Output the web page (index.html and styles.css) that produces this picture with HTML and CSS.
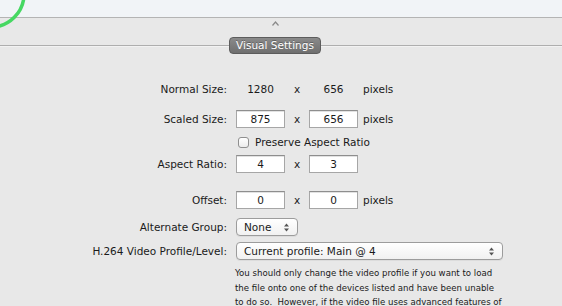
FILE: index.html
```html
<!DOCTYPE html>
<html lang="en">

<head>
    <meta charset="UTF-8">
    <title>Visual Settings</title>
    <link rel="stylesheet" href="styles.css">
</head>

<body>
    <div class="top-pane">
        <svg class="ring" width="40" height="32" viewBox="0 0 40 32">
            <circle cx="-9" cy="-6" r="33" fill="none" stroke="#46d862" stroke-width="3.5" />
        </svg>
    </div>

    <div class="splitter">
        <svg width="7" height="5" viewBox="0 0 7 5">
            <path d="M0.5 4.5 L3.5 1 L6.5 4.5" fill="none" stroke="#8a8a8a" stroke-width="1.2" />
        </svg>
    </div>

    <div class="section-head">
        <span class="section-title">Visual Settings</span>
    </div>

    <div class="form">
        <div class="row row-normal">
            <label>Normal Size:</label>
            <div class="controls">
                <span class="value">1280</span>
                <span class="times">x</span>
                <span class="value">656</span>
                <span class="unit">pixels</span>
            </div>
        </div>

        <div class="row row-scaled">
            <label>Scaled Size:</label>
            <div class="controls">
                <span class="field">875</span>
                <span class="times">x</span>
                <span class="field">656</span>
                <span class="unit">pixels</span>
            </div>
        </div>

        <div class="row row-check">
            <label></label>
            <div class="controls">
                <span class="checkbox"></span>
                <span class="check-label">Preserve Aspect Ratio</span>
            </div>
        </div>

        <div class="row row-aspect">
            <label>Aspect Ratio:</label>
            <div class="controls">
                <span class="field">4</span>
                <span class="times">x</span>
                <span class="field">3</span>
            </div>
        </div>

        <div class="row row-offset">
            <label>Offset:</label>
            <div class="controls">
                <span class="field">0</span>
                <span class="times">x</span>
                <span class="field">0</span>
                <span class="unit">pixels</span>
            </div>
        </div>

        <div class="row row-group">
            <label>Alternate Group:</label>
            <div class="controls">
                <span class="popup popup-small">None
                    <svg class="arrows" width="5" height="9" viewBox="0 0 5 9">
                        <path d="M0 3.5 L2.5 0.5 L5 3.5 Z M0 5.5 L2.5 8.5 L5 5.5 Z" fill="#555" />
                    </svg>
                </span>
            </div>
        </div>

        <div class="row row-profile">
            <label>H.264 Video Profile/Level:</label>
            <div class="controls">
                <span class="popup popup-wide">Current profile: Main @ 4
                    <svg class="arrows" width="5" height="9" viewBox="0 0 5 9">
                        <path d="M0 3.5 L2.5 0.5 L5 3.5 Z M0 5.5 L2.5 8.5 L5 5.5 Z" fill="#555" />
                    </svg>
                </span>
            </div>
        </div>

        <p class="note">You should only change the video profile if you want to load<br>
            the file onto one of the devices listed and have been unable<br>
            to do so.&nbsp; However, if the video file uses advanced features of<br>
            the codec, then the file may still be unplayable on the device.</p>
    </div>
</body>

</html>
```

FILE: styles.css
```css
body {
    font-family: 'DejaVu Sans', sans-serif;
    font-size: 10.5px;
    color: #1a1a1a;
    background-color: #e8e8e8;
    margin: 0;
    height: 306px;
    overflow: hidden;
}

.top-pane {
    height: 17px;
    background-color: #f1f4f7;
    border-bottom: 1px solid #b4b4b4;
    position: relative;
}

.ring {
    position: absolute;
    left: 0;
    top: 0;
}

.splitter {
    height: 10px;
    padding-top: 3px;
    padding-left: 272px;
}

.splitter svg {
    display: block;
}

.section-head {
    height: 19px;
    margin-top: 6px;
    background: linear-gradient(#e8e8e8 8px, #aeaeae 8px, #aeaeae 9px, #f2f2f2 9px, #f2f2f2 10px, #e8e8e8 10px);
    padding-left: 229px;
}

.section-title {
    display: inline-block;
    width: 90px;
    height: 15px;
    line-height: 15px;
    text-align: center;
    color: #fff;
    font-size: 10.5px;
    background: linear-gradient(#8a8a8a, #6f6f6f);
    border: 1px solid #5c5c5c;
    border-radius: 4px;
    text-shadow: 0 -1px 0 rgba(0, 0, 0, 0.3);
}

.form {
    display: flex;
    flex-direction: column;
}

.row {
    display: flex;
    align-items: center;
    height: 18px;
}

.row label {
    width: 227px;
    text-align: right;
    flex-shrink: 0;
}

.controls {
    display: flex;
    align-items: center;
    margin-left: 9px;
}

.row-normal {
    margin-top: 24px;
}

.row-scaled {
    margin-top: 12px;
}

.row-check {
    margin-top: 5px;
}

.row-aspect {
    margin-top: 4px;
}

.row-offset {
    margin-top: 18px;
}

.row-group {
    margin-top: 9px;
}

.row-profile {
    margin-top: 6px;
}

.value,
.field {
    width: 49px;
    text-align: center;
    box-sizing: border-box;
}

.field {
    height: 18px;
    line-height: 16px;
    background-color: #fff;
    border: 1px solid #a6a6a6;
    border-top-color: #8e8e8e;
    box-shadow: inset 0 1px 0 #e2e2e2;
}

.times {
    width: 24px;
    text-align: center;
}

.unit {
    margin-left: 5px;
}

.checkbox {
    width: 11px;
    height: 11px;
    margin-left: 2px;
    box-sizing: border-box;
    border: 1px solid #8f8f8f;
    border-radius: 3px;
    background: linear-gradient(#ffffff, #ececec);
}

.check-label {
    margin-left: 6px;
}

.popup {
    position: relative;
    height: 18px;
    line-height: 16px;
    box-sizing: border-box;
    padding-left: 7px;
    border: 1px solid #9c9c9c;
    border-radius: 4px;
    background: linear-gradient(#ffffff, #f1f1f1);
    box-shadow: 0 1px 0 rgba(0, 0, 0, 0.05);
}

.popup-small {
    width: 62px;
}

.popup-wide {
    width: 267px;
}

.arrows {
    position: absolute;
    right: 8px;
    top: 4px;
}

.note {
    margin: 6px 0 0 235px;
    white-space: nowrap;
    font-size: 8.6px;
    line-height: 14.5px;
}
```
